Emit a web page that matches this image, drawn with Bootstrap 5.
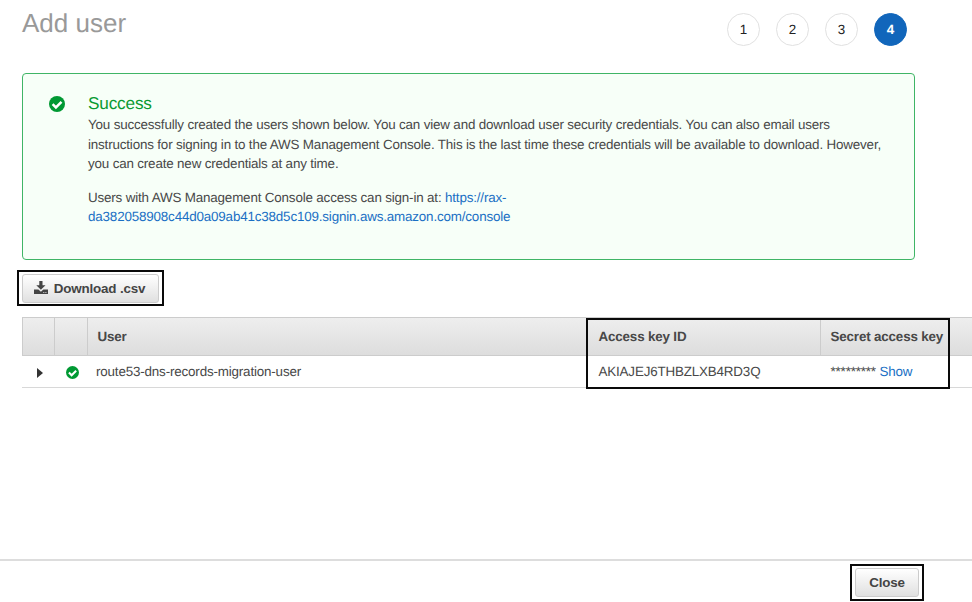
<!DOCTYPE html>
<html lang="en">
<head>
<meta charset="utf-8">
<title>Add user</title>
<meta name="viewport" content="width=device-width, initial-scale=1">
<link href="https://cdn.jsdelivr.net/npm/bootstrap@5.3.0/dist/css/bootstrap.min.css" rel="stylesheet">
<style>
body{font-family:"Liberation Sans",Arial,sans-serif;font-size:13.4px;letter-spacing:-.165px;line-height:19.3px;color:#484848;background:#fff;text-rendering:geometricPrecision}
a{color:#1a6fc4}
.page{height:602px}
.page-head{height:73px;padding:0 65px 0 22px}
.page-title{font-size:26px;line-height:30px;letter-spacing:0;color:#999;margin-top:8px}
.steps{gap:16px;margin-top:13px}
.step{width:33px;height:33px;border:1px solid #e1e1e1;color:#222}
.step.current{background:#1166bb;border-color:#1166bb;color:#fff;font-weight:bold}
.notice{width:893px;height:187px;margin-left:22px;border:1px solid #3fb566;border-radius:4px;background:#f7fff8;padding:20px 25px 0 26px}
.notice-icon{width:39px;padding-top:2px}
.notice-title{font-size:17.2px;line-height:19px;color:#0a9a32;padding-bottom:2.4px}
.notice p{margin-bottom:14.6px}
.outline{border:2.5px solid #0a0a0a}
.download-mark{width:147px;height:36px;margin:10px 0 0 17px}
.btn-plain{font-family:inherit;font-size:13.4px;letter-spacing:-.165px;line-height:19px;font-weight:bold;color:#444;border:1px solid #ccc;border-radius:3px;background:linear-gradient(#fff,#e0e0e0);padding:0}
.btn-download{width:137px;height:29px;gap:6px;padding:0 2px 0 0}
.users{margin:11px 0 0 22px;position:relative;width:950px}
.user-row{display:grid;grid-template-columns:31px 33px 501px 232px 1fr}
.user-row>div{display:flex;align-items:center}
.user-head{height:39px;background:linear-gradient(#eee,#ddd);border:1px solid #ccc;border-right:0;font-weight:bold}
.user-head>div+div{border-left:1px solid #ccc;padding-left:9.5px}
.user-head>.key-head{border-left-color:transparent}
.user-data{height:32px;border-bottom:1px solid #d8d8d8;padding-left:1px}
.user-data>div:nth-child(n+3){padding-left:10.5px}
.user-data>div:nth-child(3){padding-left:9px}
.user-data>div:nth-child(-n+2){padding:2px 0 0 3px}
.keys-mark{position:absolute;left:564px;top:1px;width:364px;height:71px}
.foot{height:43px;border-top:2px solid #ddd;padding:3px 48px 0 0}
.close-mark{width:74px;height:37px}
.btn-close-page{width:64px;height:29px;padding-bottom:1px}
</style>
<script src="https://cdn.jsdelivr.net/npm/bootstrap@5.3.0/dist/js/bootstrap.bundle.min.js"></script>
</head>
<body class="overflow-hidden">
<svg class="d-none">
  <symbol id="ok" viewBox="0 0 16 16"><circle cx="8" cy="8" r="8" fill="#093"/><path d="M3.6 8.1 6.9 11.4 12.5 5.8" fill="none" stroke="#fff" stroke-width="2.5"/></symbol>
</svg>
<div class="page d-flex flex-column">
  <header class="page-head d-flex justify-content-between align-items-start">
    <h1 class="page-title mb-0 fw-normal">Add user</h1>
    <div class="steps d-flex">
      <span class="step rounded-circle d-flex align-items-center justify-content-center">1</span>
      <span class="step rounded-circle d-flex align-items-center justify-content-center">2</span>
      <span class="step rounded-circle d-flex align-items-center justify-content-center">3</span>
      <span class="step current rounded-circle d-flex align-items-center justify-content-center">4</span>
    </div>
  </header>
  <section class="notice d-flex">
    <div class="notice-icon flex-shrink-0"><svg class="d-block" width="16" height="16"><use href="#ok"/></svg></div>
    <div>
      <h2 class="notice-title fw-normal mb-0">Success</h2>
      <p class="text-nowrap">You successfully created the users shown below. You can view and download user security credentials. You can also email users<br>instructions for signing in to the AWS Management Console. This is the last time these credentials will be available to download. However,<br>you can create new credentials at any time.</p>
      <p class="text-nowrap">Users with AWS Management Console access can sign-in at: <a class="text-decoration-none" href="#">https://rax-<br>da382058908c44d0a09ab41c38d5c109.signin.aws.amazon.com/console</a></p>
    </div>
  </section>
  <div class="download-mark outline d-flex align-items-center justify-content-center">
    <button class="btn btn-plain btn-download d-flex align-items-center justify-content-center" type="button">
      <svg width="14" height="14" viewBox="0 0 14 14" fill="#444"><path d="M5.3 0h3.2v4.2h3L6.9 8.8 2.3 4.2h3z"/><path d="M0 8.6h4.4l2.5 2.1 2.5-2.1H14V13H0z"/><path d="M9.3 11h1v.9h-1zM11.4 11h1v.9h-1z" fill="#ddd"/></svg>
      <span>Download .csv</span>
    </button>
  </div>
  <section class="users">
    <div class="user-row user-head">
      <div></div><div></div><div>User</div><div class="key-head">Access key ID</div><div>Secret access key</div>
    </div>
    <div class="user-row user-data">
      <div class="justify-content-center"><svg width="6" height="10"><path d="M0 0 6 5 0 10z" fill="#333"/></svg></div>
      <div class="justify-content-center"><svg width="13" height="13"><use href="#ok"/></svg></div>
      <div>route53-dns-records-migration-user</div>
      <div>AKIAJEJ6THBZLXB4RD3Q</div>
      <div>*********&nbsp;<a class="text-decoration-none" href="#">Show</a></div>
    </div>
    <div class="keys-mark outline"></div>
  </section>
  <footer class="foot mt-auto d-flex justify-content-end">
    <div class="close-mark outline d-flex align-items-center justify-content-center"><button class="btn btn-plain btn-close-page" type="button">Close</button></div>
  </footer>
</div>
</body>
</html>
